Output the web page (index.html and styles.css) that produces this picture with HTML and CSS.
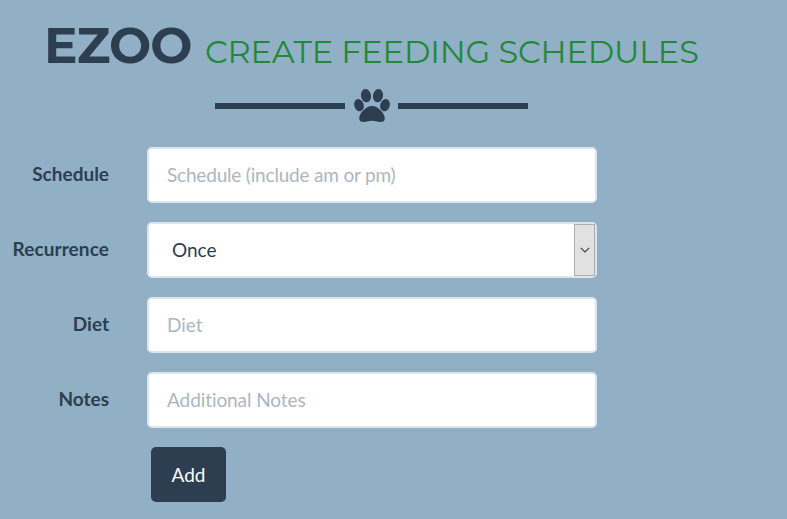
FILE: index.html
```html
<!DOCTYPE html>
<html lang="en">
<head>
<meta charset="utf-8">
<title>eZoo</title>
<link rel="stylesheet" href="styles.css">
</head>
<body>
<header>
  <h1><span class="brand">EZOO</span><span class="subtitle">CREATE FEEDING SCHEDULES</span></h1>
  <div class="divider">
    <span class="line"></span>
    <svg class="paw" width="36" height="34" viewBox="0 0 36 34"><ellipse cx="12" cy="6.700" rx="5" ry="6.700" transform="rotate(-10 12 6.7)"/><ellipse cx="24" cy="6.700" rx="5" ry="6.700" transform="rotate(10 24 6.7)"/><ellipse cx="5" cy="16.200" rx="4.700" ry="6.200" transform="rotate(-18 5 16.2)"/><ellipse cx="31" cy="16.200" rx="4.700" ry="6.200" transform="rotate(18 31 16.2)"/><path d="M18 17C11.500 17 5.200 24.500 5.200 29.500C5.200 32 7 33 9.800 33C13 33 15 31.800 18 31.800S23 33 26.200 33C29 33 30.800 32 30.800 29.500C30.800 24.500 24.500 17 18 17Z"/></svg>
    <span class="line"></span>
  </div>
</header>
<form>
  <label for="schedule">Schedule</label><input id="schedule" placeholder="Schedule (include am or pm)">
  <label for="recurrence" class="recurrence-label">Recurrence</label>
  <div class="select"><select id="recurrence"><option>Once</option></select><span class="arrow"><svg width="10" height="6" viewBox="0 0 10 6"><path d="M.8.8 5 5 9.200.8"/></svg></span></div>
  <label for="diet">Diet</label><input id="diet" placeholder="Diet">
  <label for="notes">Notes</label><input id="notes" placeholder="Additional Notes">
  <button type="button">Add</button>
</form>
</body>
</html>
```
FILE: styles.css
```css
* { box-sizing: border-box; }
body { margin: 0; background: #91b0c6; color: #2c3e50; font: 19px/27px Lato, sans-serif; font-variant-ligatures: none; overflow: hidden; }
header { width: 743px; padding-top: 21px; }
h1 { display: flex; align-items: baseline; margin: 0 0 0 44px; height: 50px; font: 700 50px/50px Montserrat, Inter, sans-serif; white-space: nowrap; }
.brand { width: 161px; letter-spacing: -.9px; }
.subtitle { color: #218838; font-size: 32px; font-weight: 400; letter-spacing: -.14px; }
.divider { display: flex; align-items: center; gap: 9px; height: 34px; margin: 18px 0 0 215px; }
.line { width: 130px; height: 6px; background: #2c3e50; }
.paw { fill: #2c3e50; }
.paw + .line { margin-left: -1px; }
form { display: grid; grid-template-columns: 109px 450px; column-gap: 38px; row-gap: 19px; margin-top: 24px; }
label { font-weight: 700; text-align: right; line-height: 54px; }
.recurrence-label { letter-spacing: .1px; }
input, .select { width: 450px; height: 56px; border: 2px solid #dce4ec; border-radius: 5px; background: #fff; color: #2c3e50; font: inherit; }
input { padding: 0 18px 2px; font-variant-ligatures: none; }
input::placeholder { color: #acb6c0; opacity: 1; }
#schedule { letter-spacing: -.19px; }
#notes { letter-spacing: -.08px; }
.select { display: flex; }
select { appearance: none; flex: 1; border: 0; padding: 0 23px 2px; background: transparent; color: #2c3e50; font: inherit; }
.arrow { display: flex; width: 21px; border: 1px solid #adadad; background: #e1e1e1; align-items: center; justify-content: center; }
.arrow path { fill: none; stroke: #444; stroke-width: 1.200; }
button { grid-column: 2; width: 75px; height: 55px; margin-left: 4px; border: 0; border-radius: 5px; background: #2c3e50; color: #fff; font: inherit; }
```
